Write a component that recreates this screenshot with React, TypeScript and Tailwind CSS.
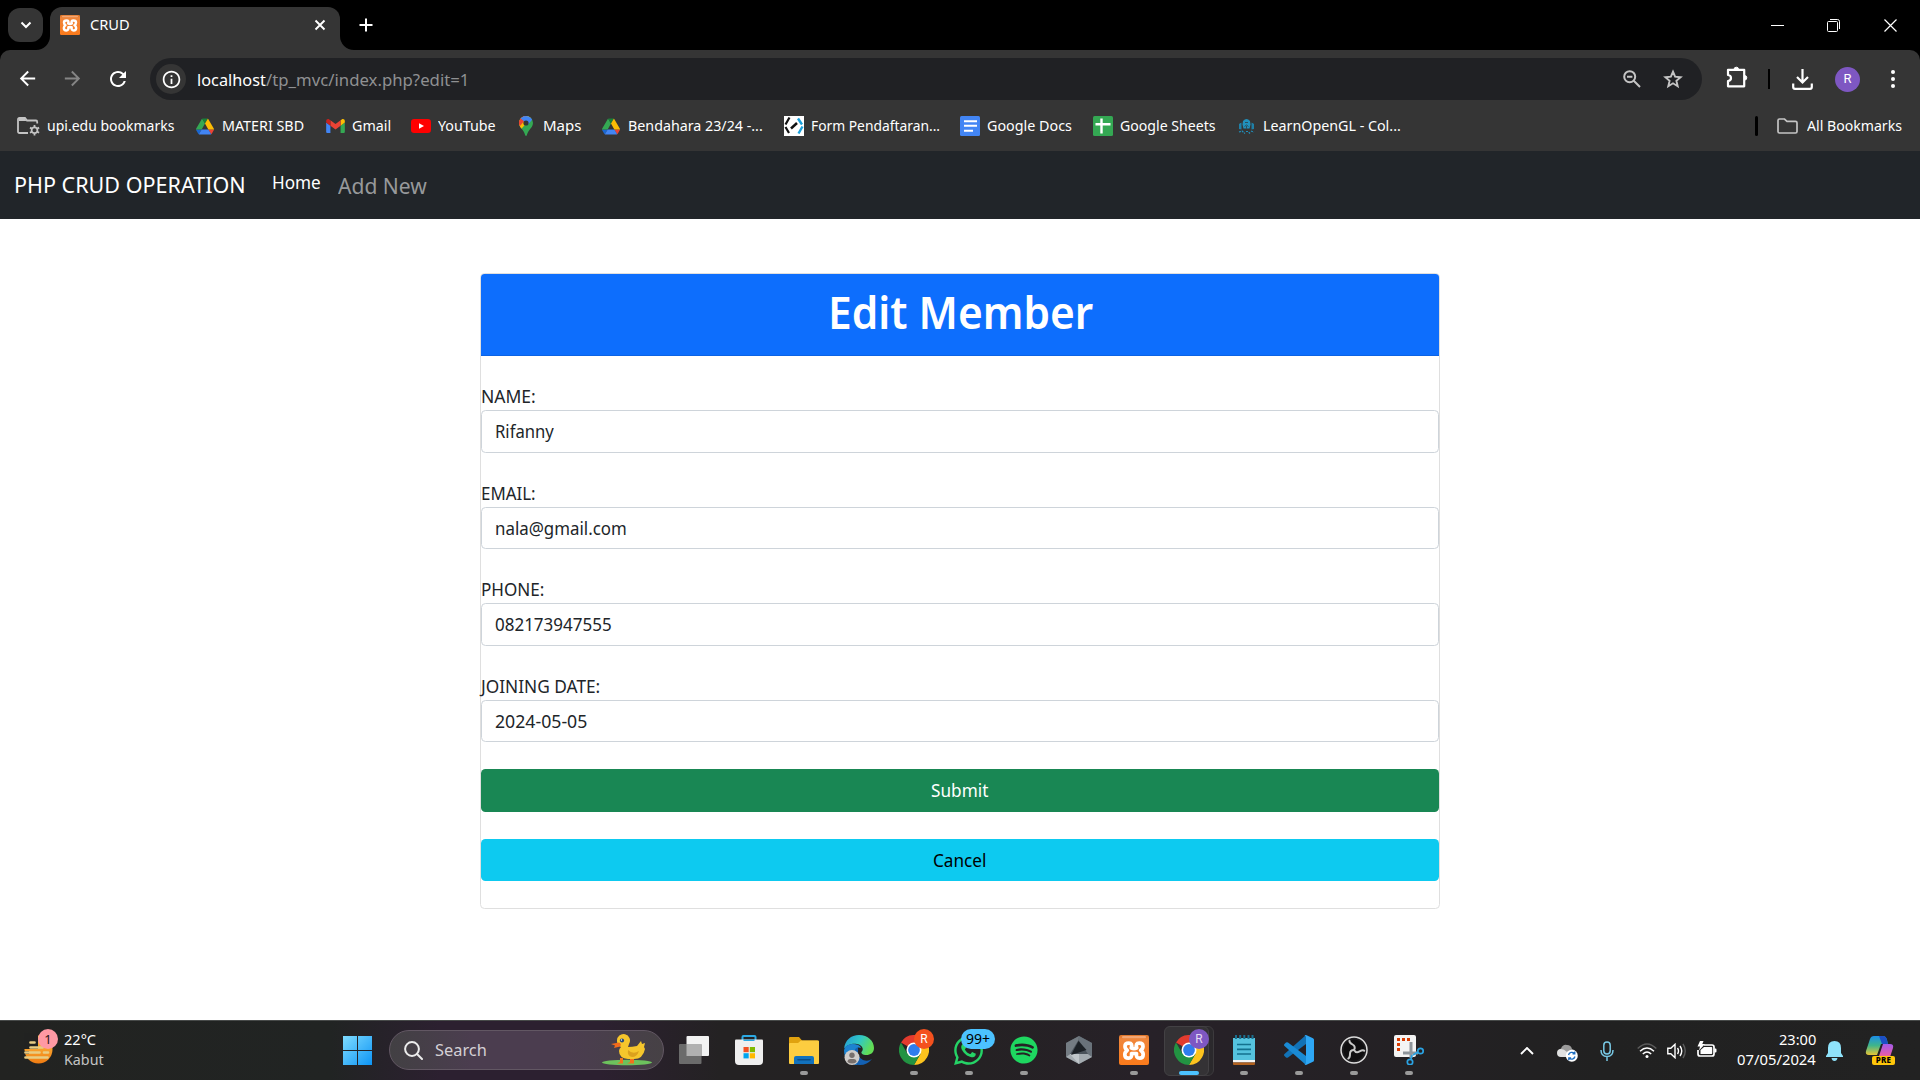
import React, { useLayoutEffect, useRef, useState } from "react";
import type { ReactNode } from "react";
import { MdArrowBack, MdArrowForward, MdRefresh, MdInfoOutline } from "react-icons/md";
import { FaWhatsapp, FaSpotify } from "react-icons/fa";

/** One line of text condensed or widened so that it takes exactly `w` pixels. */
function Fit({ w, className = "", children }: { w: number; className?: string; children: string }) {
  const ref = useRef<HTMLSpanElement>(null);
  const [scale, setScale] = useState(1);
  useLayoutEffect(() => {
    if (ref.current) setScale(w / ref.current.offsetWidth);
  }, [w]);
  return (
    <span className={`inline-flex shrink-0 whitespace-nowrap ${className}`} style={{ width: w }}>
      <span ref={ref} className="inline-block shrink-0 origin-left" style={{ transform: `scaleX(${scale})` }}>
        {children}
      </span>
    </span>
  );
}

/* ---------- logos ---------- */

function Xampp({ className }: { className: string }) {
  return (
    <svg viewBox="0 0 30 30" className={className}>
      <defs>
        <linearGradient id="xg" x1="0" y1="0" x2="0" y2="1">
          <stop offset="0" stopColor="#dd752a" />
          <stop offset="0.15" stopColor="#f0863b" />
          <stop offset="1" stopColor="#fa7a1b" />
        </linearGradient>
      </defs>
      <rect width="30" height="30" rx="2" fill="url(#xg)" />
      <rect x="3" y="1" width="24" height="2.200" rx="1" fill="#f3a673" />
      <path
        d="M12.200 12.800Q14 8.200 9.800 8.200Q6 8.200 6 11.300Q6 13.800 8.300 15.300Q5.800 16.800 5.800 19.500Q5.800 23.200 9.500 23.200Q13.200 23.200 12.500 18.500H17.500Q16.800 23.200 20.500 23.200Q24.200 23.200 24.200 19.500Q24.200 16.800 21.700 15.300Q24 13.800 24 11.300Q24 8.200 20.200 8.200Q16 8.200 17.800 12.800Q15 14.500 12.200 12.800z"
        fill="none"
        stroke="#fff"
        strokeWidth="3.700"
        strokeLinejoin="round"
      />
    </svg>
  );
}

function Drive() {
  return (
    <svg viewBox="0 0 87.3 78" className="w-[18px] h-[17px]">
      <path d="m6.600 66.850 3.850 6.650c.8 1.400 1.950 2.500 3.300 3.300L27.500 53H0c0 1.550.4 3.100 1.200 4.500z" fill="#1967d2" />
      <path d="M43.650 25 29.900 1.200c-1.350.8-2.500 1.900-3.300 3.300L1.200 48.500A9.060 9.060 0 0 0 0 53h27.500z" fill="#34a853" />
      <path d="M73.550 76.800c1.350-.8 2.500-1.900 3.300-3.300l1.600-2.750 7.650-13.250c.8-1.400 1.200-2.950 1.200-4.500H59.800l5.850 11.500z" fill="#ea4335" />
      <path d="M43.650 25 57.400 1.200C56.050.4 54.500 0 52.900 0H34.400c-1.600 0-3.150.45-4.500 1.200z" fill="#188038" />
      <path d="M59.800 53H27.500L13.750 76.800c1.350.8 2.900 1.200 4.500 1.200h50.800c1.600 0 3.150-.45 4.500-1.200z" fill="#4285f4" />
      <path d="m73.400 26.500-12.700-22c-.8-1.400-1.950-2.500-3.300-3.300L43.650 25l16.150 28h27.450c0-1.550-.4-3.100-1.200-4.500z" fill="#fbbc04" />
    </svg>
  );
}

function Gmail() {
  return (
    <svg viewBox="52 42 88 66" className="w-[19px] h-[14px]">
      <path fill="#4285f4" d="M58 108h14V74L52 59v43c0 3.320 2.690 6 6 6" />
      <path fill="#34a853" d="M120 108h14c3.320 0 6-2.690 6-6V59l-20 15" />
      <path fill="#fbbc04" d="M120 48v26l20-15v-8c0-7.420-8.470-11.650-14.400-7.200" />
      <path fill="#ea4335" d="M72 74V48l24 18 24-18v26L96 92" />
      <path fill="#c5221f" d="M52 51v8l20 15V48l-5.600-4.200c-5.940-4.450-14.400-.22-14.400 7.200" />
    </svg>
  );
}

function YouTube() {
  return (
    <svg viewBox="0 0 20 14" className="w-5 h-[14px]">
      <rect width="20" height="14" rx="3.200" fill="#f00" />
      <path d="M8 4.200v5.600L13 7z" fill="#fff" />
    </svg>
  );
}

function Maps() {
  return (
    <svg viewBox="0 0 14 20" className="w-[14px] h-5">
      <defs>
        <clipPath id="pin">
          <path d="M7 0a7 7 0 0 1 7 7c0 3-2 5-3.800 7.300C9 16 8.300 17.500 7.800 19.300c-.3.900-1.300.9-1.600 0C5.700 17.500 5 16 3.800 14.300 2 12 0 10 0 7a7 7 0 0 1 7-7z" />
        </clipPath>
      </defs>
      <g clipPath="url(#pin)">
        <rect width="14" height="20" fill="#34a853" />
        <path d="M0 15.500 12 2V-1H0z" fill="#fbbc04" />
        <path d="M-1 11 7 1V-1H-1z" fill="#ea4335" />
        <path d="M1 2.300 5 5.700 9.200 8.500 13.200 3.500V-1H2z" fill="#4285f4" />
        <path d="M1.600 2.500 5 5.300 1 10-1 6z" fill="#ea4335" />
      </g>
      <circle cx="7" cy="7" r="2.600" fill="#353535" />
    </svg>
  );
}

function FormLogo() {
  return (
    <svg viewBox="0 0 20 20" className="w-5 h-5">
      <rect width="20" height="20" fill="#fff" />
      <path d="M5.500 1.500 1.500 8.500M1.500 11l3.500 6" stroke="#111" strokeWidth="2.200" fill="none" />
      <path d="M14 2.500l4 6M18.500 10.500l-4 7" stroke="#1aa0dc" strokeWidth="2.400" fill="none" />
      <path d="M7 12.500l6-5.500" stroke="#111" strokeWidth="2.500" />
    </svg>
  );
}

function Docs() {
  return (
    <svg viewBox="0 0 20 20" className="w-5 h-5">
      <rect width="20" height="20" rx="1.500" fill="#4285f4" />
      <path d="M4 5.200h13M4 9.700h13M4 14.700h9" stroke="#fff" strokeWidth="2.100" />
    </svg>
  );
}

function Sheets() {
  return (
    <svg viewBox="0 0 20 20" className="w-5 h-5">
      <rect width="20" height="20" rx="1.500" fill="#34a853" />
      <path d="M2.500 8.300h15M8.500 2.500v15" stroke="#fff" strokeWidth="2.400" />
    </svg>
  );
}

function LearnGL() {
  return (
    <svg viewBox="0 0 17 17" className="w-[17px] h-[17px]">
      <path d="M5 3q3.500-4 7 0l.5 3.500-1 4H5.500l-1-4z" fill="#2191bd" />
      <path d="M3.800 4 1 6v5l2.500.5V4zM13.200 4 16 6v5l-2.500.5V4z" fill="#1f7fa6" />
      <path d="M1 14l3-1 3 2.500M8 13.500h2l2 2M13 13l3 1.200" stroke="#2090bd" strokeWidth="1.200" strokeDasharray="2 1" fill="none" />
      <path d="M7 4.500h3M6.500 8.500l2-1.500 2 1.500M8.500 8v3" stroke="#29505f" strokeWidth="1" fill="none" />
    </svg>
  );
}

function ManagedFolder() {
  return (
    <svg viewBox="0 0 23 19" className="w-[23px] h-[19px]" fill="none" stroke="#c4c4c4" strokeWidth="1.800">
      <path d="M11 16H2.500Q1 16 1 14.500v-12Q1 1 2.500 1H8l2 2.500h9q1.200 0 1.200 1.500v1.500" />
      <path d="M2 2h6l1.500 2H2z" fill="#c4c4c4" stroke="none" />
      <circle cx="17.500" cy="13.200" r="2.900" strokeWidth="1.700" />
      <path d="M17.500 8v2M17.500 16.500v2M13 10.600l1.700 1M20.300 14.800l1.800 1M13 15.800l1.700-1M20.300 11.600l1.800-1" strokeWidth="1.800" />
    </svg>
  );
}

function Folder() {
  return (
    <svg viewBox="0 0 21 16" className="w-[21px] h-4" fill="none" stroke="#c4c4c4" strokeWidth="1.700">
      <path d="M1 2.500Q1 1 2.500 1H7.500L10 3.300h8.500Q20 3.300 20 4.800v8.700q0 1.500-1.500 1.500h-16Q1 15 1 13.500z" />
    </svg>
  );
}

function ChromeLogo() {
  return (
    <svg viewBox="0 0 30 30" className="w-[30px] h-[30px]">
      <path d="M15 15 2 7.500A15 15 0 0 1 28 7.500H15z" fill="#e33b2e" />
      <path d="M15 15 28 7.500A15 15 0 0 1 15 30l6.500-11.200z" fill="#fcc31e" />
      <path d="M15 15l6.500 3.800L15 30A15 15 0 0 1 2 7.500l6.500 11.300z" fill="#229342" />
      <path d="M15 7.500h13a15 15 0 0 1 1.200 3L18 11z" fill="#fcc31e" />
      <circle cx="15" cy="15" r="7.500" fill="#fff" />
      <circle cx="15" cy="15" r="5.900" fill="#2f7ded" />
    </svg>
  );
}

/* ---------- browser ---------- */

const bookmarks: { label: string; text: number; cell: string; icon: ReactNode }[] = [
  { label: "MATERI SBD", text: 82, cell: "w-[130px]", icon: <Drive /> },
  { label: "Gmail", text: 39, cell: "w-[86px]", icon: <Gmail /> },
  { label: "YouTube", text: 58, cell: "w-[105px]", icon: <YouTube /> },
  { label: "Maps", text: 38, cell: "w-[85px]", icon: <Maps /> },
  { label: "Bendahara 23/24 -...", text: 135, cell: "w-[183px]", icon: <Drive /> },
  { label: "Form Pendaftaran...", text: 129, cell: "w-[176px]", icon: <FormLogo /> },
  { label: "Google Docs", text: 85, cell: "w-[133px]", icon: <Docs /> },
  { label: "Google Sheets", text: 96, cell: "w-[143px]", icon: <Sheets /> },
  { label: "LearnOpenGL - Col...", text: 138, cell: "w-[170px]", icon: <LearnGL /> },
];

function TabStrip() {
  return (
    <div className="flex h-[50px] bg-black pl-2">
      <div className="mt-2 flex h-[34px] w-[35px] items-center justify-center rounded-xl bg-[#353535]">
        <svg viewBox="0 0 12 8" className="w-3 h-2">
          <path d="M1.500 1.500 6 6l4.500-4.500" fill="none" stroke="#fff" strokeWidth="2" />
        </svg>
      </div>
      <div className="relative ml-[7px] mt-[7px] flex h-[43px] w-[290px] items-center rounded-t-xl bg-[#353535] pb-[7px] pl-[10px]">
        <svg viewBox="0 0 14 14" className="absolute -left-[14px] bottom-0 w-[14px] h-[14px]">
          <path d="M14 0v14H0A14 14 0 0 0 14 0z" fill="#353535" />
        </svg>
        <svg viewBox="0 0 14 14" className="absolute -right-[14px] bottom-0 w-[14px] h-[14px]">
          <path d="M0 0v14h14A14 14 0 0 1 0 0z" fill="#353535" />
        </svg>
        <Xampp className="w-5 h-5" />
        <Fit w={40} className="ml-[9.5px] -mt-px text-[15px]">CRUD</Fit>
        <svg viewBox="0 0 12 12" className="ml-auto mr-[14px] w-3 h-3">
          <path d="M1.500 1.500l9 9M10.500 1.500l-9 9" stroke="#fff" strokeWidth="1.900" />
        </svg>
      </div>
      <svg viewBox="0 0 14 14" className="ml-[19px] mt-[18px] w-[14px] h-[14px]">
        <path d="M7 .5v13M.5 7h13" stroke="#fff" strokeWidth="2" />
      </svg>
      <div className="ml-auto flex h-[50px] pr-px">
        <div className="flex w-[57px] items-center justify-center">
          <div className="h-px w-[13px] bg-white" />
        </div>
        <div className="flex w-[55px] items-center justify-center">
          <svg viewBox="0 0 13 13" className="w-[13px] h-[13px]" fill="none" stroke="#fff">
            <path d="M3 .5h7.500a2 2 0 0 1 2 2V10" />
            <rect x=".5" y="2.500" width="10" height="10" rx="1" />
          </svg>
        </div>
        <div className="flex w-[58px] items-center justify-center">
          <svg viewBox="0 0 13 13" className="w-[13px] h-[13px]">
            <path d="M.5.5l12 12M12.500.5l-12 12" stroke="#fff" strokeWidth="1.200" />
          </svg>
        </div>
      </div>
    </div>
  );
}

function Toolbar() {
  return (
    <div className="bg-black">
      <div className="flex h-[58px] items-center rounded-t-[10px] bg-[#353535] px-[5px]">
        <div className="flex w-[145px] text-white">
          <div className="flex w-[45px] justify-center"><MdArrowBack className="w-[23px] h-[23px]" /></div>
          <div className="flex w-[45px] justify-center text-[#858585]"><MdArrowForward className="w-[23px] h-[23px]" /></div>
          <div className="flex w-[45px] justify-center"><MdRefresh className="w-6 h-6" /></div>
        </div>
        <div className="flex h-[42px] w-[1552px] items-center rounded-full bg-[#202124] pl-[6px] pr-[18px]">
          <div className="flex h-[30px] w-[30px] items-center justify-center rounded-full bg-[#353535]">
            <MdInfoOutline className="w-[21px] h-[21px] text-white" />
          </div>
          <Fit w={69} className="ml-[10.5px] mt-px text-[17px] text-white">localhost</Fit>
          <Fit w={203} className="mt-px text-[17px] text-[#8f9092]">/tp_mvc/index.php?edit=1</Fit>
          <svg viewBox="0 0 18 18" className="ml-auto mr-[22px] w-[18px] h-[18px]" fill="none" stroke="#c4c4c4" strokeWidth="2">
            <circle cx="6.700" cy="6.700" r="5.500" />
            <path d="M10.500 10.500l6.500 6.500M4 6.700h5.400" />
          </svg>
          <svg viewBox="0 0 20 20" className="mr-[1px] w-5 h-5" fill="none" stroke="#c4c4c4" strokeWidth="1.900">
            <path d="M10 2.700l2.100 5 5.500.500-4.200 3.600 1.300 5.400L10 14.300l-4.700 2.900 1.300-5.400L2.400 8.200l5.500-.5z" />
          </svg>
        </div>
        <div className="ml-auto flex items-center text-white">
          <div className="flex w-[43px] justify-center">
            <svg viewBox="0 0 22 22" className="-mt-1 w-[22px] h-[22px]" fill="none" stroke="#fff" strokeWidth="2.200" strokeLinejoin="round">
              <path d="M2 3.800h16.200v16.500H2v-5.300q3-.3 3-3t-3-3z" />
              <path d="M8 3.500a2.300 2.300 0 0 1 4.600 0zM18.500 9.500a2.300 2.300 0 0 1 0 4.600z" fill="#fff" strokeWidth="1" />
            </svg>
          </div>
          <div className="flex w-[22px] justify-center"><div className="h-5 w-[2px] bg-black" /></div>
          <div className="flex w-[45px] justify-center">
            <svg viewBox="0 0 21 21" className="w-[21px] h-[21px]" fill="none" stroke="#fff" strokeWidth="2.200">
              <path d="M10.500 0v13M5 8l5.500 5.500L16 8M1.200 14.500v3.500q0 1.800 1.800 1.800h15q1.800 0 1.800-1.800v-3.500" />
            </svg>
          </div>
          <div className="flex w-[45px] justify-center">
            <div className="flex h-[25px] w-[25px] items-center justify-center rounded-full bg-[#7e57c2] font-['Roboto'] text-[13px]">R</div>
          </div>
          <div className="flex w-[45px] flex-col items-center gap-[3px]">
            <div className="h-1 w-1 rounded-full bg-white" />
            <div className="h-1 w-1 rounded-full bg-white" />
            <div className="h-1 w-1 rounded-full bg-white" />
          </div>
        </div>
      </div>
    </div>
  );
}

function BookmarkBar() {
  return (
    <div className="flex h-[43px] items-center bg-[#353535] pb-[7px] pl-[17px] pr-[18px] text-[15px] text-white">
      <div className="flex w-[178px] items-center">
        <ManagedFolder />
        <Fit w={127} className="-mt-[2px] ml-[7px]">upi.edu bookmarks</Fit>
      </div>
      {bookmarks.map((b) => (
        <div key={b.label} className={`flex items-center ${b.cell}`}>
          <div className="flex w-5 justify-center">{b.icon}</div>
          <Fit w={b.text} className="-mt-[2px] ml-[7px]">{b.label}</Fit>
        </div>
      ))}
      <div className="ml-auto h-5 w-[3px] rounded-sm bg-black" />
      <div className="ml-[19px] flex items-center">
        <Folder />
        <Fit w={95} className="-mt-[2px] ml-[9px]">All Bookmarks</Fit>
      </div>
    </div>
  );
}

/* ---------- page ---------- */

const fields = [
  { label: "NAME:", lw: 55, value: "Rifanny", vw: 59 },
  { label: "EMAIL:", lw: 55, value: "nala@gmail.com", vw: 132 },
  { label: "PHONE:", lw: 63.5, value: "082173947555", vw: 116.5 },
  { label: "JOINING DATE:", lw: 119.5, value: "2024-05-05", vw: 92 },
];

function Page() {
  return (
    <div className="h-[801px] bg-white pt-[54px] text-[17.5px] text-[#212529]">
      <div className="mx-auto h-[636px] w-[960px] rounded-[4.5px] border border-[#dfdfdf]">
        <div className="flex h-[82.25px] justify-center rounded-t-[3.5px] border-b border-[#0c63e4] bg-[#0d6efd] pt-[11px] text-white">
          <Fit w={265} className="ml-px h-[54px] text-[44.5px] font-semibold leading-[54px]">Edit Member</Fit>
        </div>
        <div className="pt-[27px]">
          {fields.map((f) => (
            <div key={f.label} className="mb-[27px]">
              <div className="flex h-[27px] leading-[27px]"><Fit w={f.lw}>{f.label}</Fit></div>
              <div className="flex h-[42.5px] items-center rounded-[4.5px] border border-[#ced4da] pl-[13px]">
                <Fit w={f.vw}>{f.value}</Fit>
              </div>
            </div>
          ))}
          <div className="mb-[27px] flex h-[42.5px] items-center justify-center rounded-[4.5px] bg-[#198754] pr-px text-white">
            <Fit w={57}>Submit</Fit>
          </div>
          <div className="flex h-[42.5px] items-center justify-center rounded-[4.5px] bg-[#0dcaf0] pr-px text-black">
            <Fit w={53}>Cancel</Fit>
          </div>
        </div>
      </div>
    </div>
  );
}

/* ---------- taskbar ---------- */

function Weather() {
  return (
    <svg viewBox="0 0 34 36" className="w-[34px] h-9">
      <defs>
        <linearGradient id="sun" x1="0" y1="0" x2="0" y2="1">
          <stop offset="0" stopColor="#ffc244" />
          <stop offset="1" stopColor="#f07c12" />
        </linearGradient>
      </defs>
      <circle cx="14.500" cy="20.500" r="14" fill="url(#sun)" />
      <path d="M0 4h14v16H0z" fill="#212221" />
      <path d="M0 22h5v3H0z" fill="#212221" />
      <path d="M6.500 13.500h4M6.500 18.500h12M1.500 23.500h14M20 23.500h4M1.500 28.500h22" stroke="#e8cd83" strokeWidth="2.700" strokeLinecap="round" />
      <circle cx="24" cy="10" r="10" fill="#ff99a4" />
    </svg>
  );
}

function Duck() {
  return (
    <svg viewBox="0 0 52 32" className="w-[52px] h-8">
      <ellipse cx="26" cy="28.500" rx="25" ry="2.800" fill="#6dc25d" />
      <path d="M19 24v4l-3 1.500h6V24M29 24v4l-3 1.500h7V24" fill="#f2721c" />
      <path d="M16 7a6.500 6.500 0 1 1 12 3l-1 3q4 0 9-1l4-5 1 3 3-1-1 4 1 2q-2 10-11 10h-6q-9-1-9-8 0-2 2-4-4-2-4-6z" fill="#f6c62c" />
      <path d="M27 16q5 5 11 1-2 6-7 6-5-1-4-7z" fill="#dca11d" />
      <circle cx="21" cy="6.500" r="2.100" fill="#24497c" />
      <circle cx="20.500" cy="6" r=".7" fill="#fff" />
      <path d="M18 8.500l-8 1.500 4 1.500-1 2.500 6-1.500q2-3-1-4z" fill="#f26b1c" />
    </svg>
  );
}

function TaskView() {
  return (
    <svg viewBox="0 0 30 28" className="w-[30px] h-7">
      <rect x="7.500" width="22.500" height="20" rx="1" fill="#f2f2f2" />
      <rect y="8" width="22.500" height="20" rx="1" fill="#6b6b6b" />
      <path d="M7.500 8h15v12h-15z" fill="#b0b0b0" />
    </svg>
  );
}

function Store() {
  return (
    <svg viewBox="0 0 30 30" className="w-[30px] h-[30px]">
      <path d="M8.500 8V2Q8.500 1 9.500 1h11q1 0 1 1v6" fill="none" stroke="#2ba9e3" strokeWidth="2" />
      <path d="M1 5.500q0-1 1-1h26q1 0 1 1V26q0 4-4 4H5q-4 0-4-4z" fill="#efefef" />
      <path d="M9.500 4.500h11v1.500h-11z" fill="#2ba9e3" />
      <path d="M9.500 12h5.200v5.200H9.500z" fill="#f25022" />
      <path d="M15.800 12H21v5.200h-5.200z" fill="#7fba00" />
      <path d="M9.500 18.200h5.200v5.200H9.500z" fill="#00a4ef" />
      <path d="M15.800 18.200H21v5.200h-5.200z" fill="#ffb900" />
    </svg>
  );
}

function Explorer() {
  return (
    <svg viewBox="0 0 30 27" className="w-[30px] h-[27px]">
      <path d="M0 1q0-1 1-1h9l3 3.500H28q2 0 2 2V10H0z" fill="#e0a20f" />
      <path d="M0 7q0-1 1-1h8l3-2.500h17q1 0 1 1V26q0 1-1 1H1q-1 0-1-1z" fill="#fdcd40" />
      <path d="M5 27v-6q0-2 2-2h16q2 0 2 2v6z" fill="#1272bd" />
      <path d="M9 22.800h12" stroke="#0a4d87" strokeWidth="1.600" strokeLinecap="round" />
    </svg>
  );
}

function Edge() {
  return (
    <svg viewBox="0 0 30 30" className="w-[30px] h-[30px]">
      <defs>
        <linearGradient id="ed1" x1="0" y1="0" x2="1" y2=".4">
          <stop offset="0" stopColor="#2398d8" />
          <stop offset=".55" stopColor="#31c8c4" />
          <stop offset="1" stopColor="#62dd55" />
        </linearGradient>
      </defs>
      <path d="M1 12Q0 30 16 30q7 0 12-6-4 3-9 1-6-3-5-9 1-5-4-7z" fill="#1361b4" />
      <path d="M0 14C1 5 7 0 15 0c9 0 15 6 15 13 0 5-4 7-7.500 7-4 0-5.500-1.500-5-3 2.500-2 1.500-7-4.500-8C7 8 1.500 11 0 14z" fill="url(#ed1)" />
      <path d="M0 15q2-6 8-6 8 0 9 4-6-2-7 5-1 6 3 12Q0 28 0 15z" fill="#1d83d0" />
      <circle cx="8" cy="22.500" r="7.500" fill="#d0cdca" />
      <circle cx="8" cy="20.300" r="2.700" fill="#77706d" />
      <path d="M3.500 27q0-3 3-3h3q3 0 3 3-2 1.500-4.500 1.500T3.500 27z" fill="#77706d" />
    </svg>
  );
}

function Cube() {
  return (
    <svg viewBox="0 0 26 28" className="w-[26px] h-7">
      <path d="M13 0 26 7v14l-13 7L0 21V7z" fill="#4a525a" />
      <path d="M13 0 26 7v14l-4-3L12.500 4z" fill="#69727a" />
      <path d="M0 7 13 0l-.5 4L4 18l-4 3z" fill="#747c83" />
      <path d="M0 21l4-3 18 0 4 3-13 7z" fill="#a4abb0" />
      <path d="M4 18h9v10z" fill="#c0c6ca" />
      <path d="M12.500 5 20.500 14 5 19z" fill="#1c2126" />
    </svg>
  );
}

function Notepad() {
  return (
    <svg viewBox="0 0 22 30" className="w-[22px] h-[30px]">
      <path d="M0 3h22v24H0z" fill="#55c3de" />
      <path d="M0 25h22v2.500H0z" fill="#f5f5f5" />
      <path d="M0 27.500h22V29q0 1-1 1H1q-1 0-1-1z" fill="#b2611e" />
      <path d="M3 0v4M7.200 0v4M11.300 0v4M15.500 0v4M19.500 0v4" stroke="#1a6f8e" strokeWidth="2" />
      <path d="M4 9.500h14M4 14.300h14M4 19h14" stroke="#13718e" strokeWidth="1.700" />
    </svg>
  );
}

function VSCode() {
  return (
    <svg viewBox="0 0 30 30" className="w-[30px] h-[30px]">
      <path d="M22 0 22 9 4 22.500q-1 .7-2 0L.5 21q-1-1 0-2z" fill="#1272b6" />
      <path d="M22 30v-9L4 7.500q-1-.7-2 0L.500 9q-1 1 0 2z" fill="#1a8ad4" />
      <path d="M22 0l7 3.200q1 .5 1 1.500v20.600q0 1-1 1.500L22 30q-1 0-1.500-1 1.500.5 1.500-1V2q0-1.500-1.500-1 .5-1 1.500-1z" fill="#2ea7f5" />
    </svg>
  );
}

function Obs() {
  return (
    <svg viewBox="0 0 28 28" className="w-7 h-7">
      <circle cx="14" cy="14" r="13" fill="#1c1b1e" stroke="#dcdcdc" strokeWidth="1.500" />
      <circle cx="14" cy="14" r="10.500" fill="#0f0e10" />
      <g fill="none" stroke="#c7c7c7" strokeWidth="2" strokeLinecap="round">
        <path d="M14 14Q16 10.500 12.500 8.500T9.500 4.800" />
        <path d="M14 14Q16 10.500 12.500 8.500T9.500 4.800" transform="rotate(120 14 14)" />
        <path d="M14 14Q16 10.500 12.500 8.500T9.500 4.800" transform="rotate(240 14 14)" />
      </g>
    </svg>
  );
}

function Snip() {
  return (
    <svg viewBox="0 0 30 30" className="w-[30px] h-[30px]">
      <rect width="22" height="22" rx="2" fill="#f4f4f4" />
      <path d="M3 4.500h13M4.500 8v8" stroke="#d83b01" strokeWidth="3" strokeDasharray="3 2" />
      <path d="M15.500 7h3v16h-3zM9 16.500h15v3H9z" fill="#8f969c" />
      <circle cx="26.500" cy="16" r="2.700" fill="none" stroke="#2ba3e3" strokeWidth="1.700" />
      <circle cx="16" cy="27" r="2.700" fill="none" stroke="#2ba3e3" strokeWidth="1.700" />
      <path d="M19 20l5-3M17 24l1-4" stroke="#2ba3e3" strokeWidth="1.700" />
    </svg>
  );
}

function TaskItem({ children, running, active, badge }: { children: ReactNode; running?: boolean; active?: boolean; badge?: ReactNode }) {
  return (
    <div className="relative flex h-[60px] w-[55px] shrink-0 items-center justify-center">
      {active && (
        <>
          <div className="absolute left-[9px] top-[5px] h-[50px] w-[44px] rounded-md border border-[#3c3a3d] bg-[#2b292c]" />
          <div className="absolute left-[3px] top-[5px] h-[50px] w-[45px] rounded-md border border-[#434144] bg-[#343235]" />
        </>
      )}
      <div className="relative -mt-px">{children}</div>
      {running && !active && <div className="absolute bottom-[6px] h-1 w-2 rounded-full bg-[#9a9a9a]" />}
      {active && <div className="absolute bottom-[6px] h-1 w-5 rounded-full bg-[#4cc2ff]" />}
      {badge}
    </div>
  );
}

function Taskbar() {
  return (
    <div className="flex h-[60px] items-center border-t border-[#474a49] bg-[linear-gradient(90deg,#222321_0px,#212423_330px,#2c2030_440px,#2c2030_600px,#242223_720px,#242222_900px,#272128_1150px,#212121_1600px,#222222_1920px)] text-white">
      <div className="relative ml-[24px] mr-[6px] -mt-[8px] h-9 w-[34px]">
        <Weather />
        <div className="absolute left-[14px] top-0 w-5 text-center text-[13px] leading-5 text-[#2b1517]">1</div>
      </div>
      <div className="-mt-[4px] w-[265px] text-[15px] leading-5">
        <div className="flex"><Fit w={32}>22°C</Fit></div>
        <div className="flex text-[#c4c4c4]"><Fit w={40}>Kabut</Fit></div>
      </div>
      <svg viewBox="0 0 29 29" className="ml-[14px] w-[29px] h-[29px]">
        <defs>
          <linearGradient id="win" x1="0" y1="0" x2="1" y2="1">
            <stop offset="0" stopColor="#7fdcff" />
            <stop offset="1" stopColor="#0d94f5" />
          </linearGradient>
        </defs>
        <path d="M0 0h14v14H0zM15 0h14v14H15zM0 15h14v14H0zM15 15h14v14H15z" fill="url(#win)" />
      </svg>
      <div className="-mt-px ml-[17px] flex h-10 w-[275px] items-center rounded-full border border-[#625763] bg-[linear-gradient(90deg,#424043,#4b3d4f_30%,#4b3d4f_65%,#464145)] pl-[14px] pr-[10px]">
        <svg viewBox="0 0 19 19" className="w-[19px] h-[19px]" fill="none" stroke="#ececec" strokeWidth="2">
          <circle cx="8" cy="8" r="6.900" />
          <path d="M13 13l5 5" strokeLinecap="round" />
        </svg>
        <Fit w={52} className="ml-3 text-[17px] text-[#d4d0d5]">Search</Fit>
        <div className="ml-auto"><Duck /></div>
      </div>
      <div className="ml-[2px] flex">
        <TaskItem><TaskView /></TaskItem>
        <TaskItem><Store /></TaskItem>
        <TaskItem running><Explorer /></TaskItem>
        <TaskItem><Edge /></TaskItem>
        <TaskItem
          running
          badge={<div className="absolute left-[28px] top-[8px] flex h-5 w-5 items-center justify-center rounded-full bg-[#f4511e] font-['Roboto'] text-[12px]">R</div>}
        >
          <ChromeLogo />
        </TaskItem>
        <TaskItem
          running
          badge={<div className="absolute left-[20px] top-[8px] flex h-5 w-[34px] items-center justify-center rounded-full bg-[#4cc2ff] text-[14px] text-black">99+</div>}
        >
          <FaWhatsapp className="w-[33px] h-[33px] text-[#25d366]" />
        </TaskItem>
        <TaskItem running><FaSpotify className="w-7 h-7 text-[#1ed760]" /></TaskItem>
        <TaskItem><Cube /></TaskItem>
        <TaskItem running><Xampp className="w-[30px] h-[30px]" /></TaskItem>
        <TaskItem
          active
          badge={<div className="absolute left-[28px] top-[8px] flex h-5 w-5 items-center justify-center rounded-full bg-[#7e57c2] font-['Roboto'] text-[12px] text-[#e5dcf3]">R</div>}
        >
          <ChromeLogo />
        </TaskItem>
        <TaskItem running><Notepad /></TaskItem>
        <TaskItem running><VSCode /></TaskItem>
        <TaskItem running><Obs /></TaskItem>
        <TaskItem running><Snip /></TaskItem>
      </div>
      <div className="ml-auto flex h-10 items-center pr-[25px]">
        <svg viewBox="0 0 14 8" className="w-[14px] h-2">
          <path d="M1 7l6-6 6 6" fill="none" stroke="#fff" strokeWidth="1.900" />
        </svg>
        <svg viewBox="0 0 21 18" className="ml-[23px] mt-1 w-[21px] h-[18px]">
          <path d="M5 13a4.500 4.500 0 0 1-1-8.500Q6 0 10 1q4 0 5 4 4 1 4 4l-5 4z" fill="#9b9b9b" />
          <path d="M4 13a4 4 0 0 1 0-8q3 0 6 3l3 2v3z" fill="#e0e0e0" />
          <circle cx="14.800" cy="11.800" r="6" fill="#fff" />
          <path d="M11.500 11a3.500 3.500 0 0 1 6-1.500M18 12.500a3.500 3.500 0 0 1-6 1.500M17.800 7.500v2.300h-2.300M11.800 16.200v-2.300h2.300" fill="none" stroke="#1b6cc0" strokeWidth="1.300" />
        </svg>
        <svg viewBox="0 0 14 20" className="ml-[22px] w-[14px] h-5" fill="none" stroke="#78c8e4" strokeWidth="1.500">
          <rect x="3.800" y="1" width="6.400" height="12" rx="3.200" />
          <path d="M1 9q0 6.500 6 6.500T13 9M7 15.500V20" />
        </svg>
        <svg viewBox="0 0 20 16" className="ml-[23px] w-5 h-4" fill="none" stroke="#fff" strokeWidth="1.500">
          <path d="M.7 5.500q9.300-9 18.600 0" stroke="#5b5b5b" />
          <path d="M3 8.300q7-6.500 14 0M5.800 11q4.200-4 8.400 0" />
          <circle cx="10" cy="13.500" r="1.500" fill="#fff" stroke="none" />
        </svg>
        <svg viewBox="0 0 20 16" className="ml-[10px] w-5 h-4" fill="none" stroke="#fff" strokeWidth="1.400">
          <path d="M.8 5.300h3L8 1.300v13.400L3.800 10.700h-3zM10.500 5q2 3 0 6M13 3q3.500 5 0 10" />
          <path d="M16 1q4.500 7 0 14" stroke="#5b5b5b" />
        </svg>
        <svg viewBox="0 0 21 17" className="ml-[9px] mb-[2px] w-[21px] h-[17px]">
          <path d="M8 4h8q2 0 2 2v7q0 2-2 2H4q-2 0-2-2V9" fill="none" stroke="#fff" strokeWidth="1.700" />
          <path d="M8 6h7.500q.7 0 .7.700v5.600q0 .7-.7.700H4.500V9zM18.500 7.500h1q1 0 1 1v2q0 1-1 1h-1z" fill="#fff" />
          <path d="M4 0h3.500L6.300 3H9L3 9.500 4 5.500H1.500z" fill="#fff" />
        </svg>
        <div className="-mt-[4px] ml-[20px] flex flex-col items-end text-[15px] leading-5">
          <Fit w={37}>23:00</Fit>
          <Fit w={79}>07/05/2024</Fit>
        </div>
        <svg viewBox="0 0 17 20" className="ml-[10px] w-[17px] h-5">
          <path d="M8.500 0q6.500 0 6.500 7v5l2 3v1H0v-1l2-3V7q0-7 6.500-7zM5.500 17h6q-.5 3-3 3t-3-3z" fill="#8fe3fb" />
        </svg>
        <div className="relative ml-[22px] -mt-px h-[29px] w-[30px]">
          <svg viewBox="0 0 30 29" className="w-[30px] h-[29px]">
            <defs>
              <linearGradient id="cpa" x1="0" y1="0" x2="0" y2="1">
                <stop offset="0" stopColor="#1b8fe8" />
                <stop offset=".5" stopColor="#3fb58a" />
                <stop offset="1" stopColor="#e8c435" />
              </linearGradient>
              <linearGradient id="cpb" x1="0" y1="0" x2="0" y2="1">
                <stop offset="0" stopColor="#a35bea" />
                <stop offset=".6" stopColor="#e05bb0" />
                <stop offset="1" stopColor="#f58a4b" />
              </linearGradient>
            </defs>
            <path d="M9 0h9q3 0 4 4l1 4h-7l-4 11H4q-4 0-3-4L5 3q1-3 4-3z" fill="url(#cpa)" />
            <path d="M14 0h4q3 0 4 4l1 4h-6z" fill="#1c4fc4" />
            <path d="M18 8h7q4 0 3 4l-3 9q-1 4-5 4h-9q2-1 3-5z" fill="url(#cpb)" />
          </svg>
          <div className="absolute left-[7px] top-[20px] flex h-[9px] w-[23px] items-center justify-center rounded-[2px] bg-[#ffc60a] text-[8px] font-extrabold leading-none tracking-wide text-black">PRE</div>
        </div>
      </div>
    </div>
  );
}

export default function App() {
  return (
    <div className="flex h-[1080px] w-[1920px] flex-col overflow-hidden bg-white font-['Noto_Sans','Open_Sans',sans-serif] text-white">
      <TabStrip />
      <Toolbar />
      <BookmarkBar />
      <nav className="flex h-[68px] bg-[#212529] pl-[13.5px]">
        <Fit w={232} className="mt-[16px] text-[22px] leading-[34px]">PHP CRUD OPERATION</Fit>
        <Fit w={49} className="ml-[26px] mt-[18px] text-[17.5px] leading-[27px]">Home</Fit>
        <Fit w={89} className="ml-[17px] mt-[17px] text-[22px] leading-[34px] text-[#97999b]">Add New</Fit>
      </nav>
      <Page />
      <Taskbar />
    </div>
  );
}
